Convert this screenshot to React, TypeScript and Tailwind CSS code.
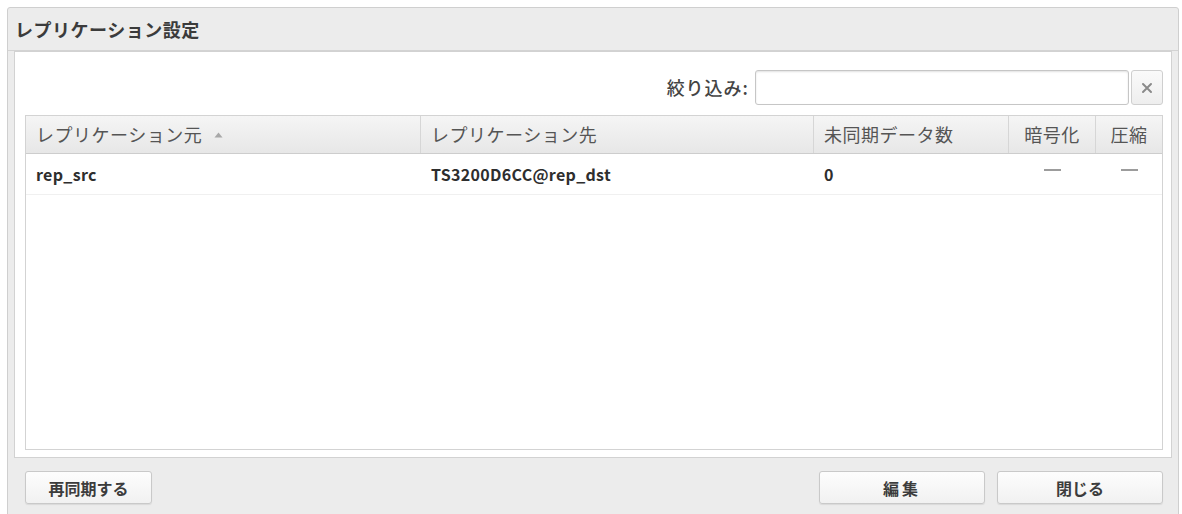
import React from "react";

const jp = { fontFamily: '"Noto Sans CJK JP", "Noto Sans", sans-serif' };

function Btn({ children, className = "" }: { children: React.ReactNode; className?: string }) {
  return (
    <div
      className={
        "h-[33px] flex items-center justify-center rounded-[3px] border border-[#c9c9c9] bg-gradient-to-b from-[#fdfdfd] to-[#f1f1f1] text-[16px] font-bold text-[#3c3c3c] shadow-[0_1px_1px_rgba(0,0,0,0.08)] " +
        className
      }
    >
      {children}
    </div>
  );
}

export default function App() {
  const th =
    "h-full flex items-center px-[10px] border-r border-[#d6d6d6] text-[18px] tracking-[0.5px] text-[#555] bg-gradient-to-b from-[#f5f5f5] to-[#e7e7e7]";
  return (
    <div style={jp} className="w-[1182px] h-[514px] bg-white pt-[7px] pl-[7px] pr-[3px] overflow-hidden">
      <div className="h-[520px] border border-[#cfcfcf] rounded-t-[3px] bg-[#ececec] flex flex-col">
        <div className="h-[43px] flex items-center px-[7px] border-b border-[#d3d3d3] text-[18px] tracking-[0.5px] font-bold text-[#3b3b3b]">
          レプリケーション設定
        </div>
        <div className="mx-[6px] h-[407px] border border-[#d2d2d2] bg-white flex flex-col pt-[18px] pl-[10px] pr-[8px] pb-[7px]">
          <div className="h-[35px] flex items-center justify-end">
            <span className="text-[18px] tracking-[1px] text-[#444] mr-[6px] font-medium">絞り込み:</span>
            <div className="w-[374px] h-[35px] border border-[#c6c6c6] rounded-[3px] shadow-[inset_0_1px_2px_rgba(0,0,0,0.12)] bg-white" />
            <div className="w-[32px] h-[35px] ml-[2px] border border-[#cfcfcf] rounded-[3px] bg-gradient-to-b from-[#fafafa] to-[#eeeeee] flex items-center justify-center">
              <svg width="12" height="12" viewBox="0 0 12 12">
                <path d="M2 2 L10 10 M10 2 L2 10" stroke="#8a8a8a" strokeWidth="2" strokeLinecap="round" />
              </svg>
            </div>
          </div>
          <div className="mt-[10px] flex-1 border border-[#d3d3d3] flex flex-col">
            <div className="h-[38px] flex border-b border-[#cdcdcd]">
              <div className={th + " w-[395px] bg-gradient-to-b from-[#ececec] to-[#dedede]"}>
                レプリケーション元
                <svg className="ml-[12px]" width="9" height="6" viewBox="0 0 9 6">
                  <path d="M0.5 5.5 L4.5 0.5 L8.5 5.5 Z" fill="#a8a8a8" />
                </svg>
              </div>
              <div className={th + " w-[393px]"}>レプリケーション先</div>
              <div className={th + " w-[195px]"}>未同期データ数</div>
              <div className={th + " w-[87px] justify-center"}>暗号化</div>
              <div className={th + " flex-1 justify-center border-r-0"}>圧縮</div>
            </div>
            <div className="h-[41px] flex items-center border-b border-[#f0f0f0] text-[16px] font-semibold tracking-[0.3px] text-[#2e2e2e]">
              <div className="w-[395px] px-[10px]">rep_src</div>
              <div className="w-[393px] px-[10px]">TS3200D6CC@rep_dst</div>
              <div className="w-[195px] px-[10px]">0</div>
              <div className="w-[87px] flex justify-center">
                <div className="w-[17px] h-[2px] bg-[#9c9c9c] mb-[8px]" />
              </div>
              <div className="flex-1 flex justify-center">
                <div className="w-[17px] h-[2px] bg-[#9c9c9c] mb-[8px]" />
              </div>
            </div>
          </div>
        </div>
        <div className="flex items-start pt-[13px] pl-[17px] pr-[15px]">
          <Btn className="w-[127px]">再同期する</Btn>
          <div className="flex-1" />
          <Btn className="w-[166px] tracking-[3px]">編集</Btn>
          <Btn className="w-[166px] ml-[12px]">閉じる</Btn>
        </div>
      </div>
    </div>
  );
}
